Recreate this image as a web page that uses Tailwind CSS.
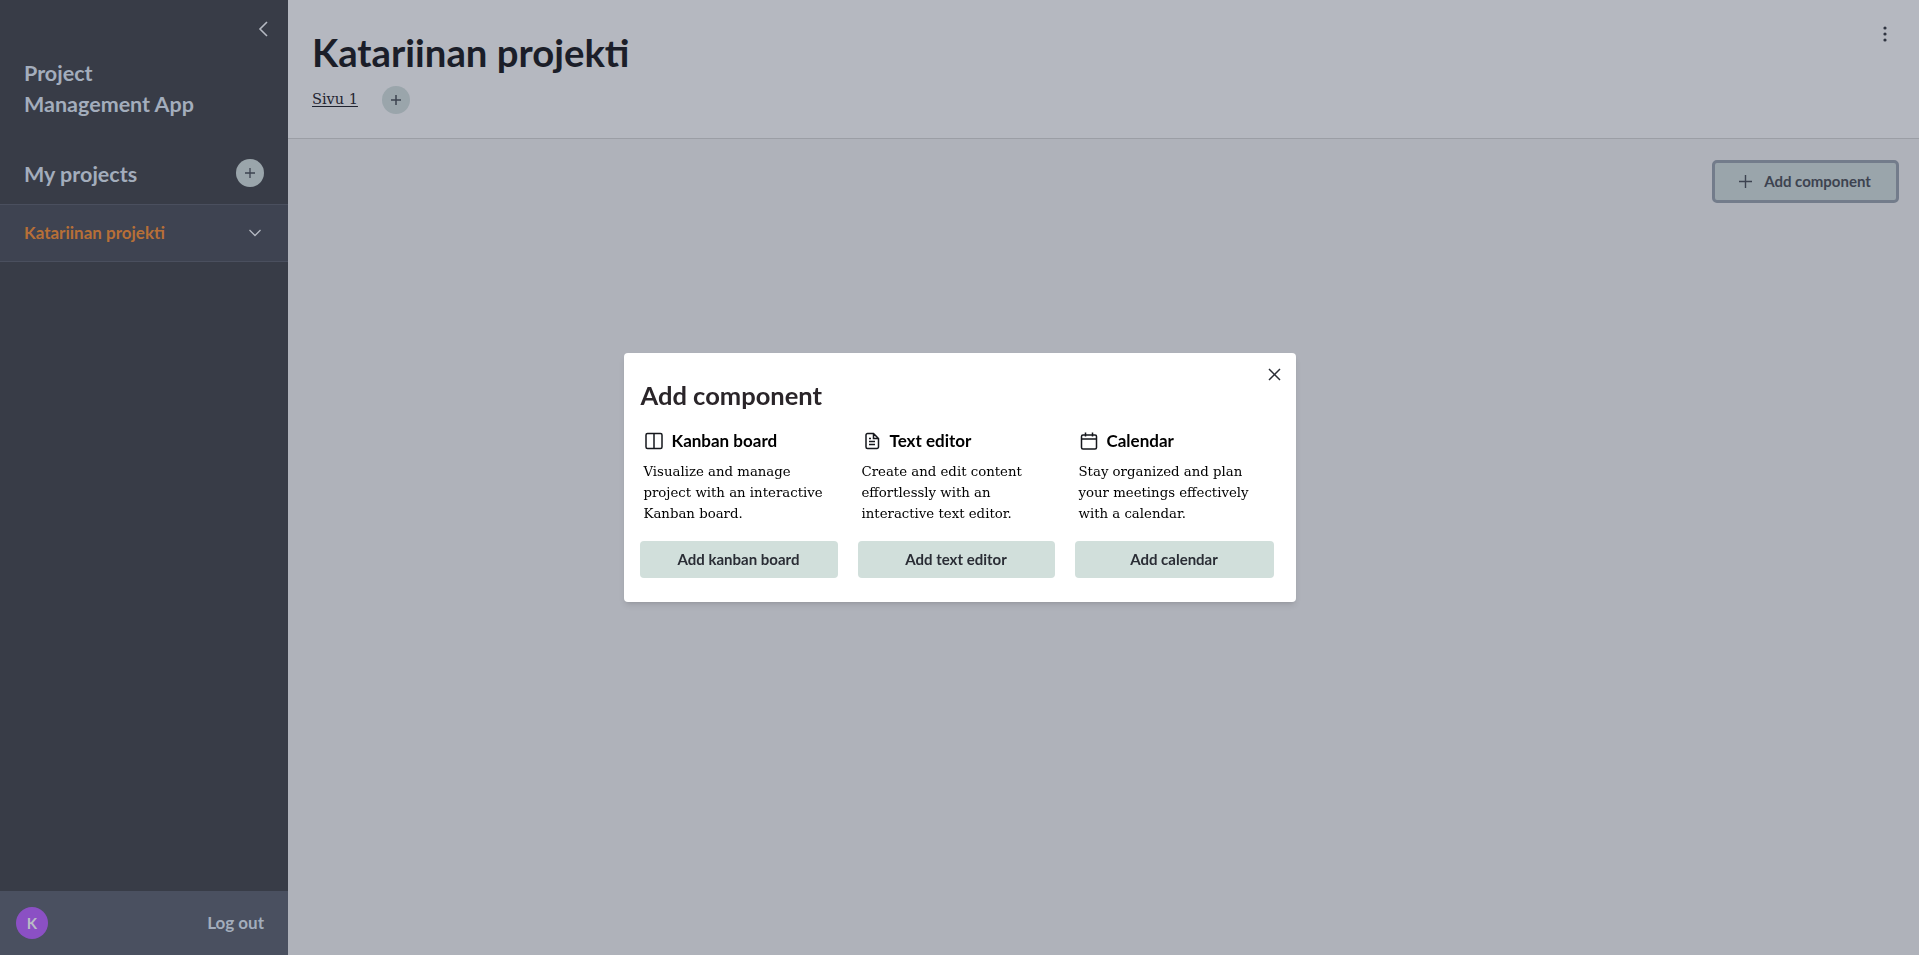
<!DOCTYPE html>
<html>
<head>
	<title>Project Management App</title>
	<script src="https://cdn.jsdelivr.net/npm/@tailwindcss/browser@4"></script>
</head>
<body class="font-['Lato',sans-serif] overflow-hidden">
	<div class="flex h-[955px] w-full">
		<!-- sidebar -->
		<aside class="flex w-[288px] shrink-0 flex-col bg-[#383c47]">
			<div class="flex h-[58px] items-center justify-end pr-[19px]">
				<svg class="h-[18px] w-[12px]" viewBox="0 0 12 18" fill="none" stroke="#b5b9c2" stroke-width="1.6"><path d="M10 2 3 9l7 7"/></svg>
			</div>
			<h1 class="pl-6 text-[21.500px] leading-[31px] font-bold text-[#a3adbc]">Project<br>Management App</h1>
			<div class="mt-[39px] flex h-[45px] items-start justify-between pr-6 pl-6">
				<span class="text-[21.500px] leading-[30px] font-bold text-[#a3adbc]">My projects</span>
				<div class="flex h-7 w-7 items-center justify-center rounded-full bg-[#9aa5ab]">
					<svg class="h-3 w-3" viewBox="0 0 12 12" stroke="#3d4350" stroke-width="1.3"><path d="M6 1v10M1 6h10"/></svg>
				</div>
			</div>
			<div class="flex h-[58px] items-center justify-between border-y border-[#4a4f5e] bg-[#3e4351] pr-[26px] pl-6">
				<span class="text-[17px] font-bold text-[#b76f37]">Katariinan projekti</span>
				<svg class="h-[8px] w-[14px]" viewBox="0 0 14 8" fill="none" stroke="#b5b9c2" stroke-width="1.3"><path d="m1.500 1 5.500 5.500L12.500 1"/></svg>
			</div>
			<div class="mt-auto flex h-[64px] items-center justify-between bg-[#4a5060] pr-6 pl-4">
				<div class="flex h-8 w-8 items-center justify-center rounded-full bg-[#8b50c4] text-[15px] font-bold text-[#b9bcc5]">K</div>
				<span class="text-[17px] font-bold text-[#a3adbc]">Log out</span>
			</div>
		</aside>

		<!-- main -->
		<main class="flex min-w-0 flex-1 flex-col bg-[#afb2ba]">
			<header class="relative h-[139px] border-b border-[#9b9ea5] bg-[#b5b8c0] pt-[27px] pl-[24px]">
				<h2 class="text-[38.300px] leading-[50px] font-bold text-[#1b1e29]">Katariinan projekti</h2>
				<div class="mt-[9px] flex items-center">
					<span class="font-['DejaVu_Serif',serif] text-[14.500px] text-[#1f2330] underline underline-offset-2">Sivu 1</span>
					<div class="ml-6 flex h-7 w-7 items-center justify-center rounded-full bg-[#9aa5ab]">
						<svg class="h-3 w-3" viewBox="0 0 12 12" stroke="#3d4350" stroke-width="1.5"><path d="M6 1v10M1 6h10"/></svg>
					</div>
				</div>
				<svg class="absolute top-[26px] right-[32px] h-[16px] w-[4px]" viewBox="0 0 4 16" fill="#2f3440"><circle cx="2" cy="2" r="1.600"/><circle cx="2" cy="8" r="1.600"/><circle cx="2" cy="14" r="1.600"/></svg>
			</header>
			<div class="flex justify-end pt-[21px] pr-[20px]">
				<button class="flex h-[43px] w-[187px] items-center justify-center gap-[12px] rounded-[5px] border-[3px] border-[#737c8b] bg-[#9aa5ab] pr-px text-[15px] font-bold text-[#3d4350]">
					<svg class="h-[13px] w-[13px]" viewBox="0 0 13 13" stroke="#3d4350" stroke-width="1.4"><path d="M6.500 0v13M0 6.500h13"/></svg>
					Add component
				</button>
			</div>
		</main>
	</div>

	<!-- modal -->
	<div class="fixed inset-0 flex items-center justify-center">
		<div class="relative h-[249px] w-[672px] rounded-[4px] bg-white pt-[26px] pl-4 shadow-md">
			<svg class="absolute top-[15px] right-[15px] h-[13px] w-[13px]" viewBox="0 0 13 13" stroke="#2a2d35" stroke-width="1.500"><path d="m1 1 11 11M12 1 1 12"/></svg>
			<h3 class="pl-px text-[25.500px] leading-[32px] font-bold text-[#2a2529]">Add component</h3>
			<div class="mt-[16px] grid grid-cols-[198px_197px_199px] gap-[20px]">
				<div>
					<div class="flex h-[28px] items-center gap-[9px] pl-[5px] text-[17px] font-bold text-black">
						<svg class="h-[18px] w-[18px]" viewBox="0 0 18 18" fill="none" stroke="#15171c" stroke-width="1.500"><rect x="1" y="1.500" width="16" height="15" rx="1.500"/><path d="M9 1.500v15"/></svg>
						Kanban board
					</div>
					<p class="mt-[6px] h-[63px] w-[186px] pl-1 font-['DejaVu_Serif',serif] text-[13.300px] leading-[21px] text-black">Visualize and manage project with an interactive Kanban board.</p>
					<button class="mt-[17px] h-[37px] w-full rounded-[4px] bg-[#d1dfdb] text-[15px] font-bold text-[#2a2d35]">Add kanban board</button>
				</div>
				<div>
					<div class="flex h-[28px] items-center gap-[9px] pl-[5px] text-[17px] font-bold text-black">
						<svg class="h-[18px] w-[18px]" viewBox="0 0 18 18" fill="none" stroke="#15171c" stroke-width="1.500"><path d="M3 3a1.500 1.500 0 0 1 1.500-1.500H10.500L15.500 6.500V15a1.500 1.500 0 0 1-1.500 1.500H4.500A1.500 1.500 0 0 1 3 15zM10.500 1.500v5h5M6 9.500h6M6 12.500h6M6 6.500h2"/></svg>
						Text editor
					</div>
					<p class="mt-[6px] h-[63px] w-[186px] pl-1 font-['DejaVu_Serif',serif] text-[13.300px] leading-[21px] text-black">Create and edit content effortlessly with an interactive text editor.</p>
					<button class="mt-[17px] h-[37px] w-full rounded-[4px] bg-[#d1dfdb] text-[15px] font-bold text-[#2a2d35]">Add text editor</button>
				</div>
				<div>
					<div class="flex h-[28px] items-center gap-[9px] pl-[5px] text-[17px] font-bold text-black">
						<svg class="h-[18px] w-[18px]" viewBox="0 0 18 18" fill="none" stroke="#15171c" stroke-width="1.500"><rect x="1.500" y="3" width="15" height="14" rx="1.500"/><path d="M1.500 7h15M5.500 0.500v4M12.500 0.500v4"/></svg>
						Calendar
					</div>
					<p class="mt-[6px] h-[63px] w-[186px] pl-1 font-['DejaVu_Serif',serif] text-[13.300px] leading-[21px] text-black">Stay organized and plan your meetings effectively with a calendar.</p>
					<button class="mt-[17px] h-[37px] w-full rounded-[4px] bg-[#d1dfdb] text-[15px] font-bold text-[#2a2d35]">Add calendar</button>
				</div>
			</div>
		</div>
	</div>
</body>
</html>
